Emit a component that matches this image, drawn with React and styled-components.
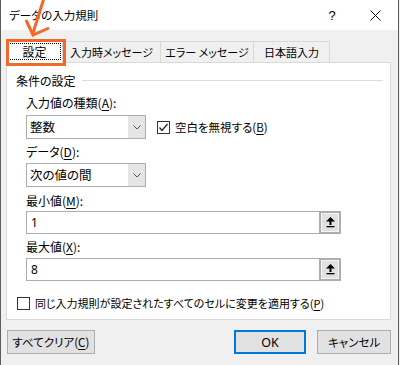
import React from "react";
import styled, { createGlobalStyle } from "styled-components";

const Global = createGlobalStyle`
  html, body { margin: 0; padding: 0; background: #f0f0f0; }
  body { font-family: "Noto Sans CJK JP", "Noto Sans", sans-serif; font-size: 12px; color: #000; font-feature-settings: "palt"; }
`;

const Win = styled.div`
  position: relative;
  width: 397px;
  height: 365px;
  border-left: 1px solid #5c5c5c;
  border-right: 1px solid #5c5c5c;
  background: #f0f0f0;
  overflow: hidden;
`;

const TitleBar = styled.div`
  height: 30px;
  background: #fff;
  display: flex;
  align-items: center;
  padding-left: 8px;
  font-size: 11.5px;
`;
const TitleText = styled.div`flex: 1;`;
const TitleBtn = styled.div`
  width: ${p => p.$w}px;
  height: 30px;
  display: flex;
  align-items: center;
  justify-content: center;
  font-family: "Liberation Sans", sans-serif;
  font-size: 13px;
`;

const Tabs = styled.div`
  display: flex;
  align-items: flex-end;
  margin: 9px 0 0 5px;
  height: 24px;
`;
const Tab = styled.div`
  width: ${p => p.$w}px;
  height: ${p => (p.$active ? 24 : 22)}px;
  box-sizing: border-box;
  border: 1px solid #d9d9d9;
  border-bottom: ${p => (p.$active ? "none" : "1px solid #d9d9d9")};
  margin-left: ${p => (p.$first ? 0 : -1)}px;
  background: ${p => (p.$active ? "#fff" : "#f0f0f0")};
  display: flex;
  align-items: center;
  justify-content: center;
  position: relative;
  z-index: ${p => (p.$active ? 2 : 1)};
  font-size: 11px;
`;
const Focus = styled.span`
  border: 1px dotted #000;
  padding: 0 13px;
  height: 15px;
  line-height: 15px;
  margin-top: -1px;
  font-size: 12px;
`;

const Panel = styled.div`
  margin: -1px 7px 0 5px;
  height: 258px;
  box-sizing: border-box;
  background: #fff;
  border: 1px solid #d9d9d9;
  padding: 9px 7px 0 9px;
  display: flex;
  flex-direction: column;
`;

const GroupHead = styled.div`
  display: flex;
  align-items: center;
  height: 16px;
`;
const GroupLine = styled.div`
  flex: 1;
  height: 1px;
  background: #dcdcdc;
  margin-left: 6px;
`;
const Indent = styled.div`
  padding-left: 10px;
  display: flex;
  flex-direction: column;
`;
const Label = styled.div`
  height: 16px;
  line-height: 16px;
  margin-top: ${p => p.$mt}px;
`;
const U = styled.span`text-decoration: underline; text-underline-offset: 2px;`;

const Row = styled.div`
  display: flex;
  align-items: center;
  margin-top: ${p => p.$mt || 0}px;
`;
const CheckText = styled.span`
  font-size: ${p => p.$fs || 12}px;
`;

const Combo = styled.div`
  width: 120px;
  height: 24px;
  box-sizing: border-box;
  border: 1px solid #adadad;
  display: flex;
  background: #fff;
`;
const ComboText = styled.div`
  flex: 1;
  padding-left: 3px;
  line-height: 22px;
  font-size: 12.5px;
`;
const ComboBtn = styled.div`
  width: 17px;
  background: #e5e5e5;
  display: flex;
  align-items: center;
  justify-content: center;
`;

const Check = styled.div`
  width: 13px;
  height: 13px;
  box-sizing: border-box;
  border: 1px solid #333;
  background: #fff;
  display: flex;
  align-items: center;
  justify-content: center;
  margin-right: 5px;
  margin-left: ${p => p.$ml || 0}px;
`;

const Field = styled.div`
  width: 315px;
  height: 23px;
  box-sizing: border-box;
  border: 1px solid #adadad;
  display: flex;
  background: #fff;
`;
const FieldText = styled.div`
  flex: 1;
  padding-left: 4px;
  line-height: 21px;
  font-family: "Noto Sans", sans-serif;
  font-size: 12px;
`;
const RefBtn = styled.div`
  width: 22px;
  margin: -1px -1px -1px 0;
  box-sizing: border-box;
  border: 2px solid #adadad;
  background: #e1e1e1;
  box-shadow: inset 0 0 0 1px #f5f5f5;
  display: flex;
  align-items: center;
  justify-content: center;
`;

const Footer = styled.div`
  display: flex;
  margin: 10px 7px 0 6px;
`;
const Button = styled.div`
  width: ${p => p.$w}px;
  height: 24px;
  box-sizing: border-box;
  border: ${p => (p.$def ? "2px solid #0078d7" : "1px solid #adadad")};
  background: #e1e1e1;
  display: flex;
  align-items: center;
  justify-content: center;
  margin-left: ${p => p.$ml || 0}px;
  font-size: 11.5px;
`;
const OkText = styled.span`font-family: "Noto Sans", sans-serif; font-size: 12.5px;`;

const Annot = styled.div`
  position: absolute;
  left: 5px;
  top: 39px;
  width: 60px;
  height: 27px;
  box-sizing: border-box;
  border: 3px solid #f0692a;
  z-index: 5;
`;
const Arrow = styled.svg`
  position: absolute;
  left: 0;
  top: 0;
  z-index: 6;
`;

const Chevron = () => (
  <svg width="8" height="5" viewBox="0 0 8 5"><polyline points="0.5,0.5 4,4 7.5,0.5" fill="none" stroke="#555" strokeWidth="1" /></svg>
);
const Tick = () => (
  <svg width="11" height="11" viewBox="0 0 11 11"><polyline points="1.5,5.5 4,8.5 9.5,2" fill="none" stroke="#222" strokeWidth="1.3" /></svg>
);
const UpIcon = () => (
  <svg width="11" height="12" viewBox="0 0 11 12">
    <polygon points="5.5,0 10,4.5 1,4.5" fill="#000" />
    <rect x="4.5" y="4" width="2" height="4" fill="#000" />
    <rect x="1.5" y="9" width="8" height="1.3" fill="#000" />
  </svg>
);

export default function App() {
  return (
    <>
      <Global />
      <Win>
        <TitleBar>
          <TitleText>データの入力規則</TitleText>
          <TitleBtn $w={40}>?</TitleBtn>
          <TitleBtn $w={46}>
            <svg width="11" height="11" viewBox="0 0 11 11"><path d="M0.5 0.5 L10.5 10.5 M10.5 0.5 L0.5 10.5" stroke="#111" strokeWidth="1" /></svg>
          </TitleBtn>
        </TitleBar>
        <Tabs>
          <Tab $w={57} $active $first><Focus>設定</Focus></Tab>
          <Tab $w={99}>入力時メッセージ</Tab>
          <Tab $w={94}>エラー メッセージ</Tab>
          <Tab $w={77}>日本語入力</Tab>
        </Tabs>
        <Panel>
          <GroupHead>条件の設定<GroupLine /></GroupHead>
          <Indent>
            <Label $mt={7}>入力値の種類(<U>A</U>):</Label>
            <Row $mt={4}>
              <Combo><ComboText>整数</ComboText><ComboBtn><Chevron /></ComboBtn></Combo>
              <Check $ml={11}><Tick /></Check>
              <CheckText $fs={11.5}>空白を無視する(<U>B</U>)</CheckText>
            </Row>
            <Label $mt={5}>データ(<U>D</U>):</Label>
            <Row $mt={3}>
              <Combo><ComboText>次の値の間</ComboText><ComboBtn><Chevron /></ComboBtn></Combo>
            </Row>
            <Label $mt={6}>最小値(<U>M</U>):</Label>
            <Row $mt={2}>
              <Field><FieldText>1</FieldText><RefBtn><UpIcon /></RefBtn></Field>
            </Row>
            <Label $mt={5}>最大値(<U>X</U>):</Label>
            <Row $mt={3}>
              <Field><FieldText>8</FieldText><RefBtn><UpIcon /></RefBtn></Field>
            </Row>
          </Indent>
          <Row $mt={14}>
            <Check $ml={1}></Check>
            <CheckText $fs={11}>同じ入力規則が設定されたすべてのセルに変更を適用する(<U>P</U>)</CheckText>
          </Row>
        </Panel>
        <Footer>
          <Button $w={88}>すべてクリア(<U>C</U>)</Button>
          <Button $w={73} $def $ml={139}><OkText>OK</OkText></Button>
          <Button $w={74} $ml={11}>キャンセル</Button>
        </Footer>
        <Annot />
        <Arrow width="60" height="45" viewBox="0 0 60 45">
          <line x1="43" y1="-2" x2="32" y2="33" stroke="#f0692a" strokeWidth="3" />
          <polyline points="25,20 32,35 48,28" fill="none" stroke="#f0692a" strokeWidth="3" />
        </Arrow>
      </Win>
    </>
  );
}
